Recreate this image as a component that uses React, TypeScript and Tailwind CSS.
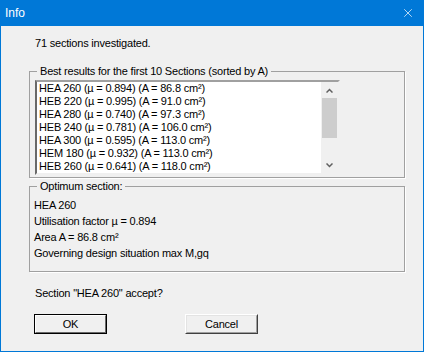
import { X } from "lucide-react";

const results = [
  "HEA 260 (µ = 0.894) (A = 86.8 cm²)",
  "HEB 220 (µ = 0.995) (A = 91.0 cm²)",
  "HEA 280 (µ = 0.740) (A = 97.3 cm²)",
  "HEB 240 (µ = 0.781) (A = 106.0 cm²)",
  "HEA 300 (µ = 0.595) (A = 113.0 cm²)",
  "HEM 180 (µ = 0.932) (A = 113.0 cm²)",
  "HEB 260 (µ = 0.641) (A = 118.0 cm²)",
];

function GroupBox({ title, className, children }: { title: string; className: string; children: React.ReactNode }) {
  return (
    <div className={"relative ml-[28px] mr-[18px] border border-[#a0a0a0] shadow-[1px_1px_0_#fff] " + className}>
      <span className="absolute -top-[8px] left-[7px] bg-[#f0f0f0] px-[3px] leading-[14px]">{title}</span>
      {children}
    </div>
  );
}

export default function App() {
  return (
    <div className="w-[424px] h-[352px] flex flex-col bg-[#f0f0f0] text-[11px] tracking-[-0.2px] text-black font-['Liberation_Sans',Arial,sans-serif]">
      {/* title bar */}
      <div className="h-[26px] flex items-center justify-between bg-[#0078d7] text-white pl-[5px] pr-[9px] tracking-normal">
        <span className="text-[12px]">Info</span>
        <X size={14} strokeWidth={1.2} className="text-white" />
      </div>

      <div className="flex-1 flex flex-col border-x border-b border-[#0078d7]">
        <p className="mt-[11px] ml-[34px] leading-[13px]">71 sections investigated.</p>

        <GroupBox title="Best results for the first 10 Sections (sorted by A)" className="mt-[21px] h-[107px] pl-[5px] pt-[8px]">
          <div className="flex w-[305px] h-[95px] bg-white border-2 border-t-[#a0a0a0] border-l-[#696969] border-b-[#f0f0f0] border-r-[#f0f0f0]">
            <div className="flex-1 pl-[2px]">
              {results.map((r) => (
                <div key={r} className="h-[13px] leading-[13px] whitespace-nowrap">{r}</div>
              ))}
            </div>
            <div className="w-[17px] flex flex-col bg-[#f0f0f0]">
              <div className="h-[16px] flex items-center justify-center">
                <svg width="7" height="5" viewBox="0 0 7 5"><path d="M0.5 4.5 L3.5 1.5 L6.5 4.5" stroke="#606060" strokeWidth="1.5" fill="none" /></svg>
              </div>
              <div className="h-[40px] mx-[1px] bg-[#cdcdcd]" />
              <div className="flex-1" />
              <div className="h-[16px] flex items-center justify-center">
                <svg width="7" height="5" viewBox="0 0 7 5"><path d="M0.5 0.5 L3.5 3.5 L6.5 0.5" stroke="#606060" strokeWidth="1.5" fill="none" /></svg>
              </div>
            </div>
          </div>
        </GroupBox>

        <GroupBox title="Optimum section:" className="mt-[8px] h-[86px] pl-[4px] pt-[10px]">
          <div className="leading-[16px]">
            <p>HEA 260</p>
            <p>Utilisation factor µ = 0.894</p>
            <p>Area A = 86.8 cm²</p>
            <p>Governing design situation max M,gq</p>
          </div>
        </GroupBox>

        <p className="mt-[15px] ml-[34px] leading-[13px]">Section "HEA 260" accept?</p>

        <div className="mt-[14px] ml-[33px] flex gap-[78px]">
          <button className="w-[73px] h-[20px] border border-black bg-[#f0f0f0] leading-[16px]">
            <span className="block h-full border border-t-white border-l-white border-b-[#696969] border-r-[#696969]">OK</span>
          </button>
          <button className="w-[73px] h-[20px] border border-t-white border-l-white border-b-[#404040] border-r-[#404040] bg-[#f0f0f0] leading-[16px]">
            <span className="block h-full border border-t-[#e3e3e3] border-l-[#e3e3e3] border-b-[#a0a0a0] border-r-[#a0a0a0]">Cancel</span>
          </button>
        </div>
      </div>
    </div>
  );
}
